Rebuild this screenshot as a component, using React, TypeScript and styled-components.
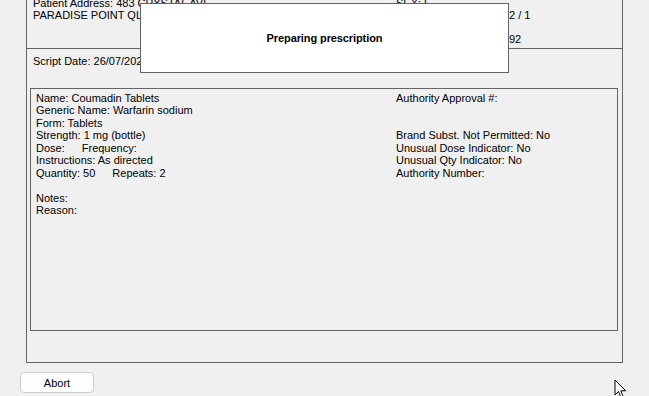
import styled, { createGlobalStyle } from 'styled-components'

const GlobalStyle = createGlobalStyle`
  html, body {
    margin: 0;
    background: #f0f0f0;
    overflow: hidden;
  }
  body {
    font-family: "Liberation Sans", Arial, sans-serif;
    font-size: 11px;
    color: #000;
  }
`

const Page = styled.div`
  position: relative;
  width: 649px;
  height: 396px;
  display: flex;
  flex-direction: column;
  overflow: hidden;
`

const Frame = styled.div`
  margin: -9px 0 0 26px;
  width: 597px;
  box-sizing: border-box;
  border: 1px solid #646464;
  display: flex;
  flex-direction: column;
`

const PatientSection = styled.div`
  height: 57px;
  box-sizing: border-box;
  padding: 5px 0 0 6px;
  border-bottom: 1px solid #646464;
  display: grid;
  grid-template-columns: 363px 1fr;
  grid-auto-rows: 12px;
  line-height: 12px;
  white-space: nowrap;
`

const FieldLabel = styled.span`
  display: inline-block;
  width: 113px;
  overflow: hidden;
  vertical-align: top;
`

const ScriptSection = styled.div`
  padding: 6px 4px 31px 3px;
  display: flex;
  flex-direction: column;
`

const ScriptDate = styled.div`
  padding-left: 3px;
  line-height: 12px;
  margin-bottom: 21px;
`

const DrugBox = styled.div`
  height: 243px;
  box-sizing: border-box;
  border: 1px solid #646464;
  padding: 3px 0 0 5px;
  display: grid;
  grid-template-columns: 360px 1fr;
  grid-auto-rows: 12.45px;
  line-height: 12.45px;
  white-space: nowrap;
`

const Spaced = styled.span`
  margin-left: 17px;
`

const AbortButton = styled.button`
  margin: 9px 0 0 20px;
  width: 74px;
  height: 21px;
  box-sizing: border-box;
  background: #fdfdfd;
  border: 1px solid #cfcfcf;
  border-radius: 4px;
  font-family: "Liberation Sans", Arial, sans-serif;
  font-size: 11px;
  color: #000;
  padding: 0;
`

const Dialog = styled.div`
  position: absolute;
  left: 140px;
  top: 3px;
  width: 369px;
  height: 70px;
  box-sizing: border-box;
  background: #fff;
  border: 1px solid #646464;
  display: flex;
  align-items: center;
  justify-content: center;
  font-weight: bold;
  font-size: 11px;
  letter-spacing: -0.1px;
  padding-bottom: 1px;
`

const Cursor = styled.svg`
  position: absolute;
  left: 614px;
  top: 379px;
`

export default function App() {
  return (
    <Page>
      <GlobalStyle />
      <Frame>
        <PatientSection>
          <div>Patient Address: 483 CRYSTAL AVE</div>
          <div>SEX: F</div>
          <div>PARADISE POINT QLD 4216</div>
          <div><FieldLabel>Repeat No:</FieldLabel>2 / 1</div>
          <div></div>
          <div></div>
          <div></div>
          <div><FieldLabel>Age:</FieldLabel>92</div>
        </PatientSection>
        <ScriptSection>
          <ScriptDate>Script Date: 26/07/2024</ScriptDate>
          <DrugBox>
            <div>Name: Coumadin Tablets</div>
            <div>Authority Approval #:</div>
            <div>Generic Name: Warfarin sodium</div>
            <div></div>
            <div>Form: Tablets</div>
            <div></div>
            <div>Strength: 1 mg (bottle)</div>
            <div>Brand Subst. Not Permitted: No</div>
            <div>Dose:<Spaced>Frequency:</Spaced></div>
            <div>Unusual Dose Indicator: No</div>
            <div>Instructions: As directed</div>
            <div>Unusual Qty Indicator: No</div>
            <div>Quantity: 50<Spaced>Repeats: 2</Spaced></div>
            <div>Authority Number:</div>
            <div></div>
            <div></div>
            <div>Notes:</div>
            <div></div>
            <div>Reason:</div>
            <div></div>
          </DrugBox>
        </ScriptSection>
      </Frame>
      <AbortButton>Abort</AbortButton>
      <Dialog>Preparing prescription</Dialog>
      <Cursor width="14" height="20" viewBox="0 0 14 20">
        <path d="M1 1 L1 16 L4.5 12.5 L7 18.5 L9.2 17.6 L6.8 11.8 L11.8 11.8 Z" fill="#fff" stroke="#000" strokeWidth="1" strokeLinejoin="round" />
      </Cursor>
    </Page>
  )
}
